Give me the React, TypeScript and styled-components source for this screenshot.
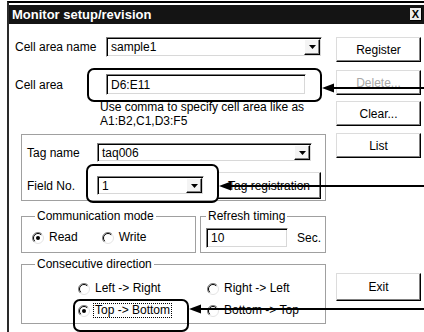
import React from "react";
import styled, { createGlobalStyle } from "styled-components";

const GlobalStyle = createGlobalStyle`
  html, body { margin: 0; padding: 0; background: #fff; }
  body { font-family: "Liberation Sans", Arial, sans-serif; font-size: 12px; color: #000; }
  * { box-sizing: border-box; }
`;

const Screen = styled.div`
  position: relative;
  width: 424px;
  height: 332px;
  overflow: hidden;
  background: #fff;
  padding: 1px 0 0 7px;
`;

const Window = styled.div`
  width: 430px;
  height: 340px;
  border-top: 2px solid #000;
  border-left: 2px solid #2a2a2a;
  padding-top: 2px;
  background: #fff;
`;

const TitleBar = styled.div`
  width: 415px;
  height: 19px;
  background: #141414;
  display: flex;
  align-items: center;
  justify-content: space-between;
  padding: 0 2px 0 3px;
`;

const Title = styled.span`
  color: #fff;
  font-weight: bold;
  font-size: 13px;
`;

const CloseBox = styled.span`
  width: 12px;
  height: 13px;
  background: #ececec;
  border-right: 1px solid #000;
  border-bottom: 1px solid #000;
  color: #000;
  font-weight: bold;
  font-size: 11px;
  line-height: 11px;
  display: flex;
  align-items: center;
  justify-content: center;
`;

const Body = styled.div`
  display: flex;
  padding-top: 13px;
`;

const MainCol = styled.div`
  width: 319px;
  display: flex;
  flex-direction: column;
`;

const ButtonCol = styled.div`
  margin-left: 8px;
  width: 85px;
  display: flex;
  flex-direction: column;
`;

const FieldRow = styled.div<{ $mt?: number; $pl?: number }>`
  display: flex;
  align-items: center;
  margin-top: ${(p) => p.$mt ?? 0}px;
  padding-left: ${(p) => p.$pl ?? 0}px;
`;

const Label = styled.span<{ $w: number }>`
  width: ${(p) => p.$w}px;
  flex: none;
  white-space: nowrap;
`;

const Sunken = styled.div<{ $w: number; $h: number }>`
  width: ${(p) => p.$w}px;
  height: ${(p) => p.$h}px;
  flex: none;
  background: #fff;
  border: 1px solid;
  border-color: #808080 #fff #fff #808080;
  box-shadow: inset 1px 1px 0 #000, inset -1px -1px 0 #d8d8d8;
  display: flex;
  align-items: center;
  padding-left: 4px;
  white-space: nowrap;
`;

const DropButton = styled.span`
  margin: 1px 1px 1px auto;
  width: 16px;
  align-self: stretch;
  background: #f4f4f4;
  border: 1px solid;
  border-color: #fff #000 #000 #fff;
  box-shadow: inset -1px -1px 0 #808080;
  display: flex;
  align-items: center;
  justify-content: center;
`;

const Hint = styled.div`
  margin-top: 5px;
  padding-left: 91px;
  line-height: 14px;
  white-space: nowrap;
`;

const GroupBox = styled.div<{ $w: number; $h: number; $mt?: number; $ml?: number; $pt?: number; $pl?: number }>`
  position: relative;
  flex: none;
  width: ${(p) => p.$w}px;
  height: ${(p) => p.$h}px;
  margin-top: ${(p) => p.$mt ?? 0}px;
  margin-left: ${(p) => p.$ml ?? 0}px;
  padding-top: ${(p) => p.$pt ?? 0}px;
  padding-left: ${(p) => p.$pl ?? 0}px;
  border: 1px solid #a0a0a0;
`;

const Legend = styled.span<{ $x: number }>`
  position: absolute;
  top: -8px;
  left: ${(p) => p.$x}px;
  background: #fff;
  padding: 0 2px;
  line-height: 14px;
  white-space: nowrap;
`;

const GroupRow = styled.div`
  display: flex;
  margin-top: 15px;
  margin-left: 12px;
  gap: 4px;
`;

const RadioLine = styled.div<{ $gap: number }>`
  display: flex;
  align-items: center;
  gap: ${(p) => p.$gap}px;
`;

const RadioGrid = styled.div`
  display: grid;
  grid-template-columns: 129px 100px;
  row-gap: 9px;
`;

const RadioItem = styled.div`
  display: flex;
  align-items: center;
  gap: 3px;
  height: 13px;
  white-space: nowrap;
`;

const FocusText = styled.span<{ $focus?: boolean }>`
  padding: 0 1px;
  line-height: 13px;
  border: 1px ${(p) => (p.$focus ? "dotted #000" : "solid transparent")};
`;

const PushButton = styled.button<{ $w?: number; $h: number; $mt?: number; $ml?: number; $disabled?: boolean }>`
  flex: none;
  width: ${(p) => p.$w ?? 85}px;
  height: ${(p) => p.$h}px;
  margin: ${(p) => p.$mt ?? 0}px 0 0 ${(p) => p.$ml ?? 0}px;
  padding: 0;
  font-family: inherit;
  font-size: 12px;
  background: #fff;
  border: 1px solid;
  border-color: #dcdcdc #000 #000 #dcdcdc;
  box-shadow: inset -1px -1px 0 #808080;
  color: ${(p) => (p.$disabled ? "#a8a8a8" : "#000")};
  text-shadow: ${(p) => (p.$disabled ? "1px 1px 0 #fff" : "none")};
  display: flex;
  align-items: center;
  justify-content: center;
`;

const SecLabel = styled.span`
  margin-left: 9px;
`;

const Callout = styled.div<{ $x: number; $y: number; $w: number; $h: number }>`
  position: absolute;
  left: ${(p) => p.$x}px;
  top: ${(p) => p.$y}px;
  width: ${(p) => p.$w}px;
  height: ${(p) => p.$h}px;
  border: 2px solid #000;
  border-radius: 7px;
`;

const ArrowWrap = styled.svg<{ $x: number; $y: number }>`
  position: absolute;
  left: ${(p) => p.$x}px;
  top: ${(p) => p.$y - 5}px;
  overflow: visible;
`;

const Arrow: React.FC<{ x: number; y: number }> = ({ x, y }) => {
  const w = 424 - x;
  return (
    <ArrowWrap $x={x} $y={y} width={w} height={10} viewBox={`0 0 ${w} 10`}>
      <line x1={10} y1={5} x2={w} y2={5} stroke="#000" strokeWidth={2} />
      <polygon points="0,5 12,0.5 12,9.5" fill="#000" />
    </ArrowWrap>
  );
};

const DownTri = () => (
  <svg width="7" height="4" viewBox="0 0 7 4">
    <polygon points="0,0 7,0 3.5,4" fill="#000" />
  </svg>
);

const Radio: React.FC<{ checked?: boolean }> = ({ checked }) => (
  <svg width="12" height="12" viewBox="0 0 12 12" style={{ flex: "none" }}>
    <circle cx="6" cy="6" r="5.5" fill="#fff" stroke="#e4e4e4" />
    <path d="M 9.9 2.1 A 5.5 5.5 0 0 0 2.1 9.9" stroke="#808080" fill="none" />
    <path d="M 9.2 2.8 A 4.5 4.5 0 0 0 2.8 9.2" stroke="#000" fill="none" />
    {checked && <circle cx="6" cy="6" r="2" fill="#000" />}
  </svg>
);

export default function App() {
  return (
    <>
      <GlobalStyle />
      <Screen>
        <Window>
          <TitleBar>
            <Title>Monitor setup/revision</Title>
            <CloseBox>X</CloseBox>
          </TitleBar>
          <Body>
            <MainCol>
              <FieldRow $pl={6}>
                <Label $w={91}>Cell area name</Label>
                <Sunken $w={216} $h={20}>
                  sample1
                  <DropButton>
                    <DownTri />
                  </DropButton>
                </Sunken>
              </FieldRow>
              <FieldRow $mt={17} $pl={6}>
                <Label $w={91}>Cell area</Label>
                <Sunken $w={200} $h={21}>D6:E11</Sunken>
              </FieldRow>
              <Hint>
                Use comma to specify cell area like as
                <br />
                A1:B2,C1,D3:F5
              </Hint>
              <GroupBox $w={305} $h={67} $mt={6} $ml={12} $pt={8} $pl={5}>
                <FieldRow>
                  <Label $w={70}>Tag name</Label>
                  <Sunken $w={215} $h={19}>
                    taq006
                    <DropButton>
                      <DownTri />
                    </DropButton>
                  </Sunken>
                </FieldRow>
                <FieldRow $mt={10}>
                  <Label $w={70}>Field No.</Label>
                  <Sunken $w={107} $h={19}>
                    1
                    <DropButton>
                      <DownTri />
                    </DropButton>
                  </Sunken>
                  <PushButton $w={104} $h={27} $ml={13}>
                    Tag registration
                  </PushButton>
                </FieldRow>
              </GroupBox>
              <GroupRow>
                <GroupBox $w={175} $h={37} $pt={14} $pl={10}>
                  <Legend $x={13}>Communication mode</Legend>
                  <RadioLine $gap={22}>
                    <RadioItem>
                      <Radio checked />
                      <FocusText>Read</FocusText>
                    </RadioItem>
                    <RadioItem>
                      <Radio />
                      <FocusText>Write</FocusText>
                    </RadioItem>
                  </RadioLine>
                </GroupBox>
                <GroupBox $w={126} $h={37} $pt={11} $pl={5}>
                  <Legend $x={5}>Refresh timing</Legend>
                  <FieldRow>
                    <Sunken $w={82} $h={20}>10</Sunken>
                    <SecLabel>Sec.</SecLabel>
                  </FieldRow>
                </GroupBox>
              </GroupRow>
              <GroupBox $w={305} $h={60} $mt={11} $ml={12} $pt={17} $pl={56}>
                <Legend $x={13}>Consecutive direction</Legend>
                <RadioGrid>
                  <RadioItem>
                    <Radio />
                    <FocusText>Left -&gt; Right</FocusText>
                  </RadioItem>
                  <RadioItem>
                    <Radio />
                    <FocusText>Right -&gt; Left</FocusText>
                  </RadioItem>
                  <RadioItem>
                    <Radio checked />
                    <FocusText $focus>Top -&gt; Bottom</FocusText>
                  </RadioItem>
                  <RadioItem>
                    <Radio />
                    <FocusText>Bottom -&gt; Top</FocusText>
                  </RadioItem>
                </RadioGrid>
              </GroupBox>
            </MainCol>
            <ButtonCol>
              <PushButton $h={25}>Register</PushButton>
              <PushButton $h={25} $mt={8} $disabled>
                Delete...
              </PushButton>
              <PushButton $h={25} $mt={6}>
                Clear...
              </PushButton>
              <PushButton $h={25} $mt={7}>
                List
              </PushButton>
              <PushButton $h={28} $mt={115}>
                Exit
              </PushButton>
            </ButtonCol>
          </Body>
        </Window>
        <Callout $x={87} $y={68} $w={235} $h={34} />
        <Callout $x={86} $y={164} $w={133} $h={39} />
        <Callout $x={73} $y={299} $w={116} $h={33} />
        <Arrow x={322} y={88} />
        <Arrow x={219} y={186} />
        <Arrow x={189} y={309} />
      </Screen>
    </>
  );
}
